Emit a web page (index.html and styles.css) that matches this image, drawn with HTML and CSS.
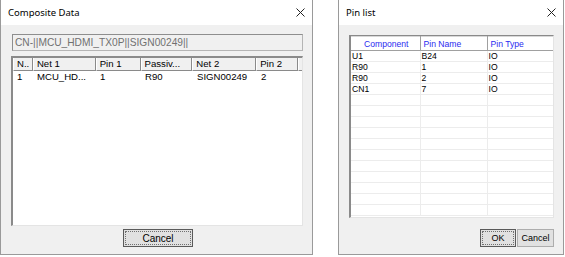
FILE: index.html
```html
<!DOCTYPE html>
<html lang="en">
<head>
    <meta charset="UTF-8">
    <title>Composite Data / Pin list</title>
    <link rel="stylesheet" href="styles.css">
</head>
<body>
    <!-- Composite Data dialog -->
    <div class="dialog composite">
        <div class="titlebar">
            <span class="title">Composite Data</span>
            <svg class="close" width="9" height="9" viewBox="0 0 9 9"><path d="M0.5 0.5L8.5 8.5M8.5 0.5L0.5 8.5" stroke="#222" stroke-width="1" fill="none"/></svg>
        </div>
        <div class="dialog-body">
            <div class="edit">CN-||MCU_HDMI_TX0P||SIGN00249||</div>
            <div class="listview">
                <div class="lv-head">
                    <div class="lv-col c1">N..</div>
                    <div class="lv-col c2">Net 1</div>
                    <div class="lv-col c3">Pin 1</div>
                    <div class="lv-col c4">Passiv...</div>
                    <div class="lv-col c5">Net 2</div>
                    <div class="lv-col c6">Pin 2</div>
                    <div class="lv-col c7"></div>
                </div>
                <div class="lv-row">
                    <div class="c1">1</div>
                    <div class="c2">MCU_HD...</div>
                    <div class="c3">1</div>
                    <div class="c4">R90</div>
                    <div class="c5">SIGN00249</div>
                    <div class="c6">2</div>
                </div>
            </div>
            <div class="buttons center">
                <button class="btn default wide"><span class="focus">Cancel</span></button>
            </div>
        </div>
    </div>

    <!-- Pin list dialog -->
    <div class="dialog pinlist">
        <div class="titlebar">
            <span class="title">Pin list</span>
            <svg class="close" width="9" height="9" viewBox="0 0 9 9"><path d="M0.5 0.5L8.5 8.5M8.5 0.5L0.5 8.5" stroke="#222" stroke-width="1" fill="none"/></svg>
        </div>
        <div class="dialog-body">
            <div class="grid">
                <table>
                    <thead>
                        <tr>
                            <th class="g1">Component</th>
                            <th class="g2">Pin Name</th>
                            <th class="g3">Pin Type</th>
                        </tr>
                    </thead>
                    <tbody id="pinRows"></tbody>
                </table>
            </div>
            <div class="buttons right">
                <button class="btn default"><span class="focus">OK</span></button>
                <button class="btn">Cancel</button>
            </div>
        </div>
    </div>

    <script>
        const pins = [
            ['U1', 'B24', 'IO'],
            ['R90', '1', 'IO'],
            ['R90', '2', 'IO'],
            ['CN1', '7', 'IO']
        ];
        const rows = document.getElementById('pinRows');
        for (let i = 0; i < 15; i++) {
            const p = pins[i] || ['', '', ''];
            const tr = document.createElement('tr');
            tr.innerHTML = `<td>${p[0]}</td><td>${p[1]}</td><td>${p[2]}</td>`;
            rows.appendChild(tr);
        }
    </script>
</body>
</html>
```

FILE: styles.css
```css
* {
    box-sizing: border-box;
}
body {
    margin: 0;
    background: #fff;
    display: flex;
    gap: 25px;
    font-family: "Liberation Sans", Arial, sans-serif;
    color: #000;
}
.dialog {
    height: 255px;
    background: #f0f0f0;
    border: 1px solid #9a9a9a;
    border-top: none;
    display: flex;
    flex-direction: column;
}
.composite {
    width: 313px;
}
.pinlist {
    width: 226px;
}
.titlebar {
    height: 25px;
    flex: none;
    background: #fff;
    display: flex;
    align-items: center;
    justify-content: space-between;
    padding: 0 7px 1px 7px;
}
.title {
    font-family: "Noto Sans", sans-serif;
    font-size: 9.5px;
}
.close {
    display: block;
}
.dialog-body {
    flex: 1;
    display: flex;
    flex-direction: column;
    padding: 9px 9px 0 10px;
}

/* read-only edit */
.edit {
    height: 17px;
    margin-left: 1px;
    width: 291px;
    border: 1px solid #b4b4b4;
    border-top-color: #8e8e8e;
    border-left-color: #8e8e8e;
    background: #f0f0f0;
    color: #707070;
    font-size: 10.2px;
    line-height: 15px;
    padding-left: 2px;
    white-space: nowrap;
}

/* list view */
.listview {
    margin-top: 5px;
    height: 170px;
    width: 292px;
    background: #fff;
    border-top: 2px solid #8a8a8a;
    border-left: 2px solid #8a8a8a;
    border-right: 1px solid #e4e4e4;
    border-bottom: 1px solid #e4e4e4;
    font-size: 9.6px;
}
.lv-head {
    display: flex;
    height: 13px;
    background: #f0f0f0;
}
.lv-col {
    border-right: 1px solid #8a8a8a;
    border-bottom: 1px solid #8a8a8a;
    border-left: 1px solid #fff;
    line-height: 12px;
    padding-left: 3px;
    white-space: nowrap;
    overflow: hidden;
}
.lv-row {
    display: flex;
    height: 12px;
    line-height: 12px;
}
.lv-row div {
    padding-left: 4px;
    white-space: nowrap;
}
.c1 { width: 20px; }
.c2 { width: 63px; }
.c3 { width: 45px; }
.c4 { width: 52px; }
.c5 { width: 64px; }
.c6 { width: 42px; }
.c7 { flex: 1; border-right: none; }

/* buttons */
.buttons {
    display: flex;
    gap: 1px;
    margin-top: 3px;
}
.buttons.center {
    justify-content: center;
    padding-left: 2px;
}
.buttons.right {
    justify-content: flex-end;
    margin-top: 11px;
    padding-right: 0;
}
.btn {
    height: 18px;
    min-width: 37px;
    padding: 1px;
    border: 1px solid #adadad;
    background: #e1e1e1;
    font-family: "Liberation Sans", Arial, sans-serif;
    font-size: 9px;
    color: #000;
    display: flex;
    align-items: center;
    justify-content: center;
}
.btn.default {
    border: 1px solid #5a5a5a;
    min-width: 36px;
}
.btn.wide {
    width: 70px;
    font-size: 10px;
}
.focus {
    flex: 1;
    align-self: stretch;
    display: flex;
    align-items: center;
    justify-content: center;
    border: 1px dotted #707070;
}

/* pin grid */
.grid {
    height: 183px;
    width: 205px;
    margin-top: 1px;
    background: #fff;
    border-top: 1px solid #8a8a8a;
    border-left: 2px solid #8a8a8a;
    border-right: 1px solid #e4e4e4;
    border-bottom: 1px solid #e4e4e4;
    overflow: hidden;
}
.grid table {
    border-collapse: collapse;
    table-layout: fixed;
    width: 203px;
    font-size: 8.6px;
}
.grid th {
    height: 14px;
    font-weight: normal;
    color: #2b2bf0;
    text-align: left;
    background: #fff;
    border-bottom: 1px solid #a0a0a0;
    border-right: 1px solid #a0a0a0;
    padding: 0 0 0 3px;
    border-top: 1px solid #d8d8d8;
}
.grid th.g1 {
    width: 69px;
    padding-left: 13px;
}
.grid th.g2 {
    width: 67px;
}
.grid th.g3 {
    width: 67px;
    border-right: 2px solid #a0a0a0;
}
.grid td {
    height: 11px;
    line-height: 10px;
    padding: 0 0 0 1px;
    border-bottom: 1px solid #ececec;
    border-right: 1px solid #ececec;
    white-space: nowrap;
}
```
